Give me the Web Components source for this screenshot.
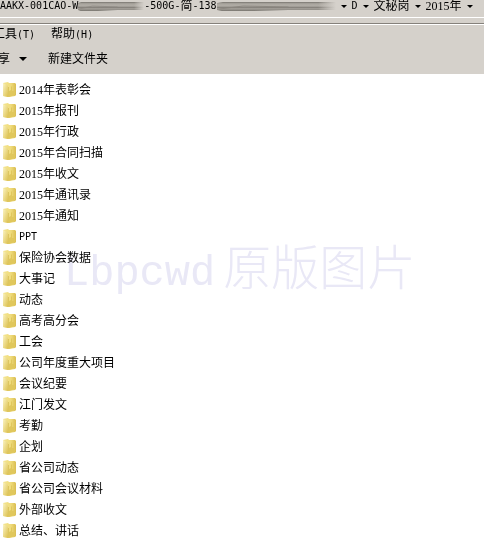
<!DOCTYPE html>
<html lang="zh-CN">
<head>
<meta charset="utf-8">
<title>2015年</title>
<style>
	body {
		margin: 0;
		min-height: 100vh;
		background: #fff;
		overflow: hidden;
		color: #000;
		font: 12px/16px "Liberation Serif", "Noto Sans CJK SC", sans-serif;
	}
</style>
</head>
<body>
<explorer-window></explorer-window>

<script>
// wraps the latin capitals in a monospace span
const latin = text => text.replace(/[A-Z()-][A-Z0-9()-]*/g, run => `<span class="mono">${run}</span>`);

const base = `
	* { box-sizing: border-box; }
	button, a { font: inherit; color: inherit; background: none; border: 0; margin: 0; padding: 0; text-decoration: none; white-space: nowrap; }
	.mono { font-family: "DejaVu Sans Mono", monospace; font-size: 10px; }
`;

// Componente <drop-arrow>
class DropArrow extends HTMLElement {
	constructor() {
		super();
		this.attachShadow({ mode: 'open' }).innerHTML = `
		<style>
			:host { display: block; flex: none; width: 16px; text-align: center; }
			:host([big]) { width: 25px; }
			svg { display: block; margin: auto; width: 6px; height: 3px; }
			:host([big]) svg { width: 8px; height: 4px; }
		</style>
		<svg viewBox="0 0 8 4" preserveAspectRatio="none"><path d="M0 0H8L4 4Z"/></svg>`;
	}
}
customElements.define('drop-arrow', DropArrow);

// Componente <smudge-bar>: hidden part of the path
class SmudgeBar extends HTMLElement {
	constructor() {
		super();
		this.attachShadow({ mode: 'open' }).innerHTML = `
		<style>
			:host { display: block; flex: none; width: 66px; height: 9px; }
			:host([wide]) { width: 119px; }
			svg { display: block; width: 100%; height: 100%; }
		</style>
		<svg viewBox="0 0 100 9" preserveAspectRatio="none">
			<defs>
				<linearGradient id="s" x2="0" y2="1">
					<stop offset="0" stop-color="#77746e"/><stop offset=".2" stop-color="#aaa69f"/>
					<stop offset=".45" stop-color="#b0aca5"/><stop offset=".6" stop-color="#85817b"/>
					<stop offset=".75" stop-color="#a5a19a"/><stop offset="1" stop-color="#77746e"/>
				</linearGradient>
				<linearGradient id="e">
					<stop offset=".85" stop-color="#d5d1cb" stop-opacity="0"/><stop offset="1" stop-color="#d5d1cb"/>
				</linearGradient>
			</defs>
			<path d="M0 1L5 0H100V8L60 8L30 9H4L0 8Z" fill="url(#s)"/>
			<path d="M2 7L22 4L60 5" stroke="#8a867f" stroke-width=".8" fill="none"/>
			<path d="M0 0H100V9H0Z" fill="url(#e)"/>
		</svg>`;
	}
}
customElements.define('smudge-bar', SmudgeBar);

// Componente <folder-item>
class FolderItem extends HTMLElement {
	constructor() {
		super();
		this.attachShadow({ mode: 'open' });
	}

	connectedCallback() {
		this.render();
	}

	render() {
		this.shadowRoot.innerHTML = `
		<style>
			${base}
			:host { display: block; }
			a { display: flex; align-items: center; gap: 3px; height: 21px; }
			svg { flex: none; width: 16px; height: 16px; }
		</style>
		<a href="#">
			<svg viewBox="0 0 16 16">
				<defs>
					<linearGradient id="b"><stop offset="0" stop-color="#f3e490"/><stop offset=".6" stop-color="#f0dc7c"/><stop offset="1" stop-color="#d9bd52"/></linearGradient>
					<linearGradient id="f" x2="1" y2="1"><stop offset="0" stop-color="#fbf4c4"/><stop offset="1" stop-color="#dcc04e"/></linearGradient>
				</defs>
				<path d="M3 1L8 0L9 1H15L16 2V13L15 14L9 15L3 14Z" fill="url(#b)"/>
				<path d="M3 1L7 3L8 4V15L3 14Z" fill="url(#f)"/>
				<path d="M9 9L11 8V5L12 4V9H15V13L9 15Z" fill="#e0c75c"/>
				<path d="M8.5 5V15" stroke="#d0b348" stroke-width=".6"/>
			</svg>
			<span>${latin(this.getAttribute('nombre'))}</span>
		</a>`;
	}
}
customElements.define('folder-item', FolderItem);

// Componente <path-bar>
class PathBar extends HTMLElement {
	constructor() {
		super();
		this.attachShadow({ mode: 'open' }).innerHTML = `
		<style>
			${base}
			:host { display: block; background: #d5d1cb; overflow: hidden; border-bottom: 1px solid #fff; }
			nav { display: flex; align-items: center; height: 12px; margin-bottom: 5px; }
			button { display: flex; align-items: center; flex: none; }
		</style>
		<nav>
			<button>${latin('AAKX-001CAO-W')}<smudge-bar></smudge-bar>${latin('-500G-')}简${latin('-138')}<smudge-bar wide></smudge-bar></button>
			<drop-arrow></drop-arrow>
			<button>${latin('D')}</button>
			<drop-arrow></drop-arrow>
			<button>文秘岗</button>
			<drop-arrow></drop-arrow>
			<button>2015年</button>
			<drop-arrow></drop-arrow>
		</nav>`;
	}
}
customElements.define('path-bar', PathBar);

// Componente <tool-rows>: menu and commands
class ToolRows extends HTMLElement {
	constructor() {
		super();
		this.attachShadow({ mode: 'open' }).innerHTML = `
		<style>
			${base}
			:host { display: block; background: #d5d1cb; overflow: hidden; padding-top: 5px; }
			.line { border-top: 1px solid #85817b; border-bottom: 1px solid #fff; }
			.row { display: flex; align-items: center; }
			.menu { gap: 16px; margin-left: -7px; height: 19px; }
			.commands { gap: 13px; margin-left: -2px; height: 30px; }
			.commands button { display: flex; align-items: center; }
		</style>
		<div class="line"></div>
		<div class="row menu"><button>工具${latin('(T)')}</button><button>帮助${latin('(H)')}</button></div>
		<div class="row commands"><button>享<drop-arrow big></drop-arrow></button><button>新建文件夹</button></div>`;
	}
}
customElements.define('tool-rows', ToolRows);

// Componente <water-mark>
class WaterMark extends HTMLElement {
	constructor() {
		super();
		this.attachShadow({ mode: 'open' }).innerHTML = `
		<style>
			:host { display: flex; align-items: baseline; gap: 8px; color: #e9e8f6; line-height: 60px; white-space: nowrap; pointer-events: none; }
			.a { font-family: "Liberation Mono", monospace; font-size: 42px; }
			.b { font-family: "Noto Sans CJK SC", sans-serif; font-size: 48px; font-weight: 300; }
		</style>
		<span class="a">Lbpcwd</span><span class="b">原版图片</span>`;
	}
}
customElements.define('water-mark', WaterMark);

// Componente <explorer-window>
const folders = [
	'2014年表彰会', '2015年报刊', '2015年行政', '2015年合同扫描', '2015年收文', '2015年通讯录',
	'2015年通知', 'PPT', '保险协会数据', '大事记', '动态', '高考高分会', '工会', '公司年度重大项目',
	'会议纪要', '江门发文', '考勤', '企划', '省公司动态', '省公司会议材料', '外部收文', '总结、讲话'
];

class ExplorerWindow extends HTMLElement {
	constructor() {
		super();
		this.attachShadow({ mode: 'open' }).innerHTML = `
		<style>
			:host { display: block; }
			main { position: relative; padding-top: 5px; }
			water-mark { position: absolute; left: 64px; top: 160px; mix-blend-mode: multiply; }
		</style>
		<path-bar></path-bar>
		<tool-rows></tool-rows>
		<main>
			${folders.map(f => `<folder-item nombre="${f}"></folder-item>`).join('')}
			<water-mark></water-mark>
		</main>`;
	}
}
customElements.define('explorer-window', ExplorerWindow);
</script>
</body>
</html>
